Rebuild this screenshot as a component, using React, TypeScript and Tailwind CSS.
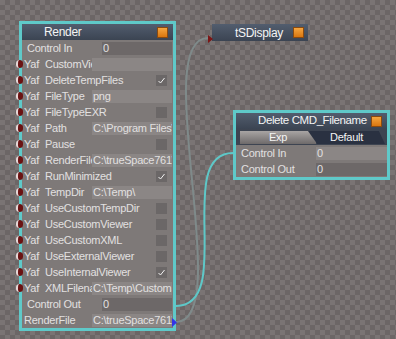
import React from "react";

type Row =
  | { kind: "ctrl"; label: string; value: string }
  | { kind: "field"; label: string; value: string; yaf?: boolean }
  | { kind: "check"; label: string; checked: boolean };

const RENDER_ROWS: Row[] = [
  { kind: "ctrl", label: "Control In", value: "0" },
  { kind: "field", label: "CustomViewer", value: "", yaf: true },
  { kind: "check", label: "DeleteTempFiles", checked: true },
  { kind: "field", label: "FileType", value: "png", yaf: true },
  { kind: "check", label: "FileTypeEXR", checked: false },
  { kind: "field", label: "Path", value: "C:\\Program Files\\YafaRay", yaf: true },
  { kind: "check", label: "Pause", checked: false },
  { kind: "field", label: "RenderFile", value: "C:\\trueSpace761\\tS\\", yaf: true },
  { kind: "check", label: "RunMinimized", checked: true },
  { kind: "field", label: "TempDir", value: "C:\\Temp\\", yaf: true },
  { kind: "check", label: "UseCustomTempDir", checked: false },
  { kind: "check", label: "UseCustomViewer", checked: false },
  { kind: "check", label: "UseCustomXML", checked: false },
  { kind: "check", label: "UseExternalViewer", checked: false },
  { kind: "check", label: "UseInternalViewer", checked: true },
  { kind: "field", label: "XMLFilename", value: "C:\\Temp\\CustomScene.xml", yaf: true },
  { kind: "ctrl", label: "Control Out", value: "0" },
  { kind: "field", label: "RenderFile", value: "C:\\trueSpace761\\tS\\" },
];

function OrangeButton() {
  return (
    <div className="w-[11px] h-[11px] shrink-0 border border-[#8a4a10] bg-[linear-gradient(180deg,#f5a640,#d9760f)]" />
  );
}

function Socket() {
  return (
    <div className="absolute left-[-6px] top-[4px] w-[7px] h-[8px] rounded-full bg-[#6a1212] border-l-2 border-[#e6d8d8]" />
  );
}

function CheckBox({ checked }: { checked: boolean }) {
  return (
    <div className="w-[11px] h-[11px] bg-[#6b6767] flex items-center justify-center">
      {checked && (
        <svg width="9" height="9" viewBox="0 0 9 9">
          <polyline points="1.5,5 3.5,7 7.5,2" fill="none" stroke="#f2f2f2" strokeWidth="1" />
        </svg>
      )}
    </div>
  );
}

function RenderRow({ row }: { row: Row }) {
  if (row.kind === "ctrl") {
    return (
      <div className="relative h-[16px] flex items-center bg-[#7e7978]">
        <div className="w-[80px] pl-[5px] whitespace-nowrap">{row.label}</div>
        <div className="flex-1 h-[13px] mr-[1px] bg-[#6d6868] pl-[1px] leading-[13px]">{row.value}</div>
      </div>
    );
  }
  if (row.kind === "check") {
    return (
      <div className="relative h-[16px] flex items-center bg-[#7e7978]">
        <Socket />
        <div className="flex-1 pl-[2px] whitespace-nowrap flex">
          <span className="w-[21px]">Yaf</span>
          <span>{row.label}</span>
        </div>
        <div className="mr-[6px]">
          <CheckBox checked={row.checked} />
        </div>
      </div>
    );
  }
  return (
    <div className="relative h-[16px] flex items-center bg-[#7e7978]">
      {row.yaf && <Socket />}
      <div className="w-[70px] pl-[2px] whitespace-nowrap overflow-hidden flex">
        {row.yaf && <span className="w-[21px] shrink-0">Yaf</span>}
        <span>{row.label}</span>
      </div>
      <div className="flex-1 h-[13px] mr-[1px] bg-[#8b8685] pl-[1px] leading-[13px] whitespace-nowrap overflow-hidden">
        {row.value}
      </div>
    </div>
  );
}

export default function App() {
  return (
    <div className="relative w-[396px] h-[339px] overflow-hidden bg-[conic-gradient(#6c6666_25%,#7a7474_0_50%,#6c6666_0_75%,#7a7474_0)] bg-[length:10px_10px] font-['Liberation_Sans',Arial,sans-serif] text-[11px] tracking-[-0.25px] text-[#e2e0e0]">
      {/* wires */}
      <svg className="absolute left-0 top-0" width="396" height="339" viewBox="0 0 396 339">
        <path d="M176 322 C236 322 148 38 208 38" fill="none" stroke="#7f8a8a" strokeWidth="2" />
        <path d="M176 306 C236 306 173 153 233 153" fill="none" stroke="#5ec8c8" strokeWidth="2" />
      </svg>

      {/* Render node */}
      <div className="absolute left-[19px] top-[21px] w-[157px] border-[3px] border-[#5fc9c9] bg-[#7e7978]">
        <div className="h-[16px] flex items-center bg-[linear-gradient(180deg,#525d6e,#3b4452)] pr-[5px]">
          <div className="flex-1 pl-[22px] text-[12px] tracking-[-0.3px] text-[#f4f4f4]">Render</div>
          <OrangeButton />
        </div>
        {RENDER_ROWS.map((r, i) => (
          <RenderRow key={i} row={r} />
        ))}
        <svg className="absolute right-[-4px] bottom-[1px]" width="5" height="9" viewBox="0 0 5 9">
          <polygon points="0,0 5,4.5 0,9" fill="#3434e6" />
        </svg>
      </div>

      {/* tSDisplay node */}
      <div className="absolute left-[212px] top-[24px] w-[96px] h-[17px] flex items-center bg-[linear-gradient(180deg,#525d6e,#3b4452)] pr-[4px]">
        <svg className="absolute left-[-4px] top-[11px]" width="5" height="8" viewBox="0 0 5 8">
          <polygon points="0,0 5,4 0,8" fill="#7c1616" />
        </svg>
        <div className="flex-1 pl-[23px] text-[12px] tracking-[-0.3px] text-[#f4f4f4]">tSDisplay</div>
        <OrangeButton />
      </div>

      {/* Delete CMD_Filename node */}
      <div className="absolute left-[233px] top-[110px] w-[157px] border-[3px] border-[#5fc9c9] bg-[#3d4451]">
        <div className="h-[16px] flex items-center bg-[linear-gradient(180deg,#525d6e,#3b4452)] pr-[5px]">
          <div className="flex-1 pl-[22px] text-[11.5px] tracking-[-0.4px] whitespace-nowrap text-[#f4f4f4]">Delete CMD_Filename</div>
          <OrangeButton />
        </div>
        <div className="relative h-[16px] flex items-end pl-[4px] pr-[2px] pb-[1px]">
          <div className="w-[76px] h-[13px] bg-[linear-gradient(180deg,#a8a4a3,#6e6a6a)] text-center leading-[13px] text-[#f4f4f4]">
            Exp
          </div>
          <div className="ml-[-8px] flex-1 h-[13px] bg-[#2a3141] [clip-path:polygon(0_0,92%_0,100%_100%,12%_100%)] text-center leading-[13px] text-[#f4f4f4]">
            Default
          </div>
        </div>
        <div className="h-[16px] flex items-center bg-[#7e7978]">
          <div className="w-[80px] pl-[5px] whitespace-nowrap">Control In</div>
          <div className="flex-1 h-[13px] bg-[#8b8685] pl-[1px] leading-[13px]">0</div>
        </div>
        <div className="h-[16px] flex items-center bg-[#7e7978]">
          <div className="w-[80px] pl-[5px] whitespace-nowrap">Control Out</div>
          <div className="flex-1 h-[13px] bg-[#6d6868] pl-[1px] leading-[13px]">0</div>
        </div>
      </div>
    </div>
  );
}
